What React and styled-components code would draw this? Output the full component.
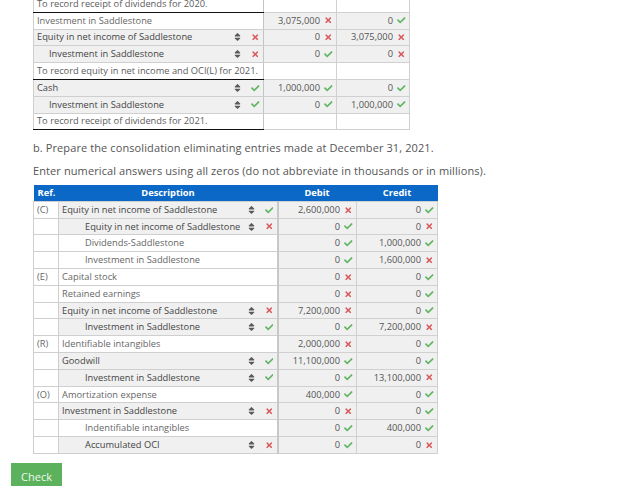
import React from "react";
import styled, { createGlobalStyle } from "styled-components";
import { FaCheck, FaTimes, FaSort } from "react-icons/fa";

const GlobalStyle = createGlobalStyle`
html, body {
    margin: 0;
    padding: 0;
    background: #fff;
    overflow: hidden;
}
body {
    font-family: "Open Sans", "Liberation Sans", sans-serif;
    color: #555;
}
`;

const ok = true;
const no = false;

// text, indent, status of select (undefined = static text), debit, credit
const topRows = [
    { note: "To record receipt of dividends for 2020.", closes: true },
    { text: "Investment in Saddlestone", debit: ["3,075,000", no], credit: ["0", ok] },
    { text: "Equity in net income of Saddlestone", status: no, debit: ["0", no], credit: ["3,075,000", no] },
    { text: "Investment in Saddlestone", indent: true, status: no, debit: ["0", ok], credit: ["0", no] },
    { note: "To record equity in net income and OCI(L) for 2021.", closes: true },
    { text: "Cash", status: ok, debit: ["1,000,000", ok], credit: ["0", ok] },
    { text: "Investment in Saddlestone", indent: true, status: ok, debit: ["0", ok], credit: ["1,000,000", ok] },
    { note: "To record receipt of dividends for 2021.", closes: true },
];

const elimRows = [
    { ref: "(C)", text: "Equity in net income of Saddlestone", status: ok, debit: ["2,600,000", no], credit: ["0", ok] },
    { text: "Equity in net income of Saddlestone", indent: true, status: no, debit: ["0", ok], credit: ["0", no] },
    { text: "Dividends-Saddlestone", indent: true, debit: ["0", ok], credit: ["1,000,000", ok] },
    { text: "Investment in Saddlestone", indent: true, debit: ["0", ok], credit: ["1,600,000", no] },
    { ref: "(E)", text: "Capital stock", debit: ["0", no], credit: ["0", ok] },
    { text: "Retained earnings", debit: ["0", no], credit: ["0", ok] },
    { text: "Equity in net income of Saddlestone", status: no, debit: ["7,200,000", no], credit: ["0", ok] },
    { text: "Investment in Saddlestone", indent: true, status: ok, debit: ["0", ok], credit: ["7,200,000", no] },
    { ref: "(R)", text: "Identifiable intangibles", debit: ["2,000,000", no], credit: ["0", ok] },
    { text: "Goodwill", status: ok, debit: ["11,100,000", ok], credit: ["0", ok] },
    { text: "Investment in Saddlestone", indent: true, status: ok, debit: ["0", ok], credit: ["13,100,000", no] },
    { ref: "(O)", text: "Amortization expense", debit: ["400,000", ok], credit: ["0", ok] },
    { text: "Investment in Saddlestone", status: no, debit: ["0", no], credit: ["0", ok] },
    { text: "Indentifiable intangibles", indent: true, debit: ["0", ok], credit: ["400,000", ok] },
    { text: "Accumulated OCI", indent: true, status: no, debit: ["0", ok], credit: ["0", no] },
];

const Mark = ({ good }) => (
    <MarkBox $good={good}>{good ? <FaCheck /> : <FaTimes />}</MarkBox>
);

const Description = ({ row, wide }) => (
    <DescInner $indent={row.indent} $wide={wide}>
        <DescText>{row.text}</DescText>
        {row.status !== undefined && (
            <>
                <SortBox><FaSort /></SortBox>
                <Mark good={row.status} />
            </>
        )}
    </DescInner>
);

const Amount = ({ value }) => (
    <AmountInner>
        {value && <span>{value[0]}</span>}
        {value && <Mark good={value[1]} />}
    </AmountInner>
);

const App = () => {
    return (
        <Page>
            <GlobalStyle />
            <Body>
                <TopTable>
                    <colgroup>
                        <col style={{ width: 230 }} />
                        <col style={{ width: 73 }} />
                        <col style={{ width: 73 }} />
                    </colgroup>
                    <tbody>
                        {topRows.map((row, idx) => (
                            <Row key={idx}>
                                {row.note ? (
                                    <NoteCell>{row.note}</NoteCell>
                                ) : (
                                    <DescCell $filled={row.status !== undefined}>
                                        <Description row={row} />
                                    </DescCell>
                                )}
                                <AmountCell $blank={!!row.note}><Amount value={row.debit} /></AmountCell>
                                <AmountCell $blank={!!row.note}><Amount value={row.credit} /></AmountCell>
                            </Row>
                        ))}
                    </tbody>
                </TopTable>

                <Prompt>b. Prepare the consolidation eliminating entries made at December 31, 2021.</Prompt>
                <Prompt>Enter numerical answers using all zeros (do not abbreviate in thousands or in millions).</Prompt>

                <ElimTable>
                    <colgroup>
                        <col style={{ width: 25 }} />
                        <col style={{ width: 219 }} />
                        <col style={{ width: 79 }} />
                        <col style={{ width: 81 }} />
                    </colgroup>
                    <thead>
                        <tr>
                            <HeadCell $left>Ref.</HeadCell>
                            <HeadCell>Description</HeadCell>
                            <HeadCell>Debit</HeadCell>
                            <HeadCell>Credit</HeadCell>
                        </tr>
                    </thead>
                    <tbody>
                        {elimRows.map((row, idx) => (
                            <Row key={idx}>
                                <RefCell>{row.ref}</RefCell>
                                <DescCell $filled={row.status !== undefined} $thick>
                                    <Description row={row} wide />
                                </DescCell>
                                <AmountCell><Amount value={row.debit} /></AmountCell>
                                <AmountCell><Amount value={row.credit} /></AmountCell>
                            </Row>
                        ))}
                    </tbody>
                </ElimTable>
            </Body>
            <CheckButton>Check</CheckButton>
        </Page>
    );
};

const Page = styled.div`
position: relative;
height: 486px;
overflow: hidden;
`;

const Body = styled.div`
margin-top: -5px;
padding-left: 33px;
`;

const TopTable = styled.table`
table-layout: fixed;
width: 376px;
border-collapse: collapse;
font-size: 9.3px;
line-height: 12px;
td, th {
    box-sizing: border-box;
}
`;

const ElimTable = styled(TopTable)`
width: 404px;
`;

const Row = styled.tr`
height: 16.8px;
`;

const NoteCell = styled.td`
height: 16.8px;
padding: 0 0 0 3px;
white-space: nowrap;
color: #5c5c5c;
background: #fff;
border: 1px solid #cfcfcf;
border-bottom: 1.5px solid #111;
border-right: 1px solid #c4c4c4;
`;

const DescCell = styled.td`
height: 16.8px;
padding: 0;
white-space: nowrap;
color: ${(p) => (p.$filled ? "#444" : "#666")};
background: ${(p) => (p.$filled ? "#f0f0f0" : "#fff")};
border: 1px solid #cfcfcf;
border-right: ${(p) => (p.$thick ? "2px solid #c8c8c8" : "1px solid #c4c4c4")};
`;

const DescInner = styled.div`
display: flex;
align-items: center;
padding-left: ${(p) => (p.$indent ? (p.$wide ? 26 : 15) : 3)}px;
`;

const DescText = styled.span`
flex: 1;
min-width: 0;
`;

const SortBox = styled.span`
display: flex;
width: 9px;
margin-right: 5px;
justify-content: center;
font-size: 10px;
color: #5a5a5a;
`;

const MarkBox = styled.span`
display: flex;
width: 9px;
margin: 0 3px 0 4px;
justify-content: center;
font-size: 8.5px;
color: ${(p) => (p.$good ? "#62b562" : "#d9595b")};
`;

const AmountCell = styled.td`
height: 16.8px;
padding: 0;
color: #555;
background: ${(p) => (p.$blank ? "#fff" : "#f0f0f0")};
border: 1px solid #d0d0d0;
`;

const AmountInner = styled.div`
display: flex;
align-items: center;
justify-content: flex-end;
`;

const RefCell = styled.td`
height: 16.8px;
padding: 0 0 0 3px;
color: #666;
background: #fff;
border: 1px solid #cfcfcf;
`;

const HeadCell = styled.th`
height: 16px;
padding: ${(p) => (p.$left ? "0 0 0 4px" : "0")};
font-size: 9.3px;
font-weight: 700;
color: #fff;
background: #0b68c6;
text-align: ${(p) => (p.$left ? "left" : "center")};
`;

const Prompt = styled.p`
margin: 0;
font-size: 11px;
line-height: 15px;
color: #555;
letter-spacing: 0.1px;
&:first-of-type {
    margin-top: 10px;
}
& + & {
    margin-top: 8px;
    margin-bottom: 7px;
}
`;

const CheckButton = styled.button`
position: absolute;
left: 11px;
top: 463px;
width: 51px;
height: 30px;
padding: 0 0 4px;
border: 0;
font-family: inherit;
font-size: 11px;
color: #eef7ee;
background: #5cb25c;
`;

export default App;
